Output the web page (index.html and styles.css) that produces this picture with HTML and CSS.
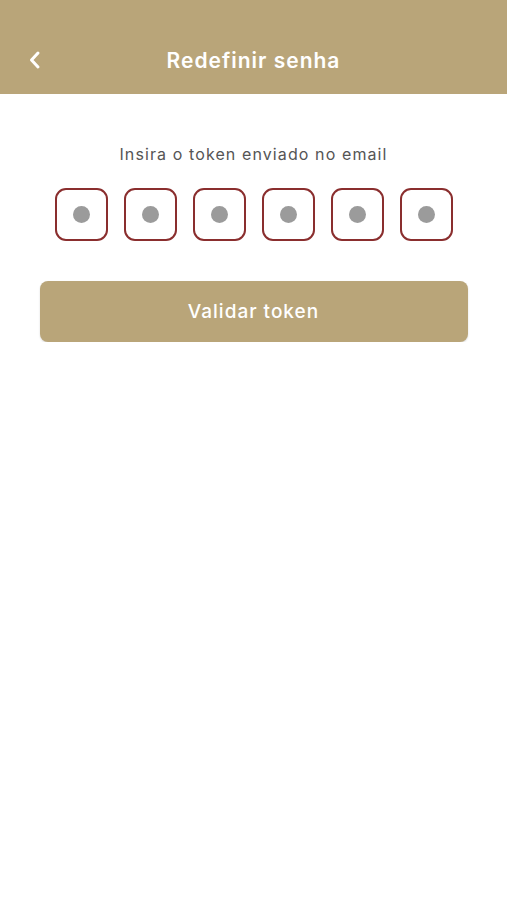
FILE: index.html
```html
<!DOCTYPE html>
<html lang="pt">
<head>
    <meta charset="UTF-8">
    <meta name="viewport" content="width=device-width, initial-scale=1.0">
    <title>Redefinir senha</title>
    <link rel="stylesheet" href="styles.css">
</head>
<body>
    <header class="topbar">
        <button class="back" aria-label="Voltar">
            <svg width="14" height="20" viewBox="0 0 14 20"><path d="M10 3 L3.5 10 L10 17" fill="none" stroke="#fff" stroke-width="3" stroke-linecap="round" stroke-linejoin="round"/></svg>
        </button>
        <h1 class="title">Redefinir senha</h1>
    </header>
    <main class="content">
        <p class="hint">Insira o token enviado no email</p>
        <div class="token-boxes">
            <div class="box"><span class="dot"></span></div>
            <div class="box"><span class="dot"></span></div>
            <div class="box"><span class="dot"></span></div>
            <div class="box"><span class="dot"></span></div>
            <div class="box"><span class="dot"></span></div>
            <div class="box"><span class="dot"></span></div>
        </div>
        <button class="validate">Validar token</button>
    </main>
</body>
</html>
```

FILE: styles.css
```css
body { margin: 0; font-family: Inter, "Noto Sans", sans-serif; background: #fff; }
.topbar { position: relative; height: 94px; background: #b9a579; display: flex; align-items: flex-end; justify-content: center; padding-bottom: 19px; box-sizing: border-box; }
.back { position: absolute; left: 28px; bottom: 21px; background: none; border: 0; padding: 0; cursor: pointer; }
.title { margin: 0; color: #fff; font-size: 21px; font-weight: 600; line-height: 28px; letter-spacing: 1px; }
.content { display: flex; flex-direction: column; align-items: center; padding-top: 49px; }
.hint { margin: 0; color: #555; font-size: 16px; line-height: 22px; letter-spacing: 1.1px; }
.token-boxes { display: flex; gap: 16px; margin-top: 23px; }
.box { width: 53px; height: 53px; box-sizing: border-box; border: 2px solid #8a2e2e; border-radius: 11px; display: flex; align-items: center; justify-content: center; }
.dot { width: 17px; height: 17px; border-radius: 50%; background: #9b9b9b; }
.validate { margin-top: 40px; width: 428px; height: 61px; border: 0; border-radius: 8px; background: #b9a579; color: #fff; font-family: inherit; font-size: 19px; font-weight: 500; letter-spacing: 1px; box-shadow: 0 1px 2px rgba(0,0,0,0.15); cursor: pointer; }
```
